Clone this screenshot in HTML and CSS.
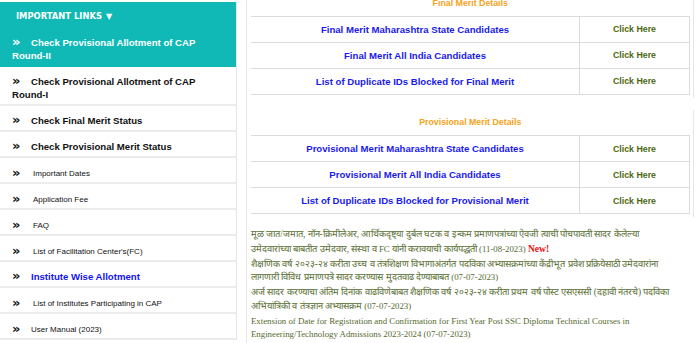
FILE: index.html
```html
<!DOCTYPE html>
<html lang="en">
<head>
  <meta charset="UTF-8">
  <meta name="viewport" content="width=device-width, initial-scale=1.0">
  <title>CAP Admissions</title>
  <link rel="stylesheet" href="styles.css">
</head>
<body>
  <div class="page">
    <div class="sidebar">
      <div class="sidebar-title">IMPORTANT LINKS <span class="caret">&#9660;</span></div>
      <a class="link big active" href="#"><span class="icon">&raquo;</span>Check Provisional Allotment of CAP Round-II</a>
      <a class="link big" href="#"><span class="icon">&raquo;</span>Check Provisional Allotment of CAP Round-I</a>
      <a class="link big" href="#"><span class="icon">&raquo;</span>Check Final Merit Status</a>
      <a class="link big" href="#"><span class="icon">&raquo;</span>Check Provisional Merit Status</a>
      <a class="link small" href="#"><span class="icon">&raquo;</span>Important Dates</a>
      <a class="link small" href="#"><span class="icon">&raquo;</span>Application Fee</a>
      <a class="link small" href="#"><span class="icon">&raquo;</span>FAQ</a>
      <a class="link small" href="#"><span class="icon">&raquo;</span>List of Facilitation Center's(FC)</a>
      <a class="link big blue" href="#"><span class="icon">&raquo;</span>Institute Wise Allotment</a>
      <a class="link small" href="#"><span class="icon">&raquo;</span>List of Institutes Participating in CAP</a>
      <a class="link small tight" href="#"><span class="icon">&raquo;</span>User Manual (2023)</a>
    </div>

    <div class="main">
      <div class="panel first">
        <table class="merit">
          <tr><th colspan="2">Final Merit Details</th></tr>
          <tr><td class="name">Final Merit Maharashtra State Candidates</td><td class="click">Click Here</td></tr>
          <tr><td class="name">Final Merit All India Candidates</td><td class="click">Click Here</td></tr>
          <tr><td class="name">List of Duplicate IDs Blocked for Final Merit</td><td class="click">Click Here</td></tr>
        </table>
      </div>

      <div class="panel">
        <table class="merit">
          <tr><th colspan="2">Provisional Merit Details</th></tr>
          <tr><td class="name">Provisional Merit Maharashtra State Candidates</td><td class="click">Click Here</td></tr>
          <tr><td class="name">Provisional Merit All India Candidates</td><td class="click">Click Here</td></tr>
          <tr><td class="name">List of Duplicate IDs Blocked for Provisional Merit</td><td class="click">Click Here</td></tr>
        </table>
      </div>

      <div class="news">
        <p>मूळ जात/जमात, नॉन-क्रिमीलेअर, आर्थिकदृष्ट्या दुर्बल घटक व इन्कम प्रमाणपत्रांच्या ऐवजी त्याची पोचपावती सादर केलेल्या<br>उमेदवारांच्या बाबतीत उमेदवार, संस्था व <span class="en">FC</span> यांनी करावयाची कार्यपद्धती <span class="date">(11-08-2023)</span> <span class="new">New!</span></p>
        <p>शैक्षणिक वर्ष २०२३-२४ करीता उच्च व तंत्रशिक्षण विभागाअंतर्गत पदविका अभ्यासक्रमांच्या केंद्रीभूत प्रवेश प्रक्रियेसाठी उमेदवारांना लागणारी विविध प्रमाणपत्रे सादर करण्यास मुदतवाढ देण्याबाबत <span class="date">(07-07-2023)</span></p>
        <p>अर्ज सादर करण्याचा अंतिम दिनांक वाढविणेबाबत शैक्षणिक वर्ष २०२३-२४ करीता प्रथम वर्ष पोस्ट एसएससी (दहावी नंतरचे) पदविका अभियांत्रिकी व तंत्रज्ञान अभ्यासक्रम <span class="date">(07-07-2023)</span></p>
        <p class="en">Extension of Date for Registration and Confirmation for First Year Post SSC Diploma Technical Courses in Engineering/Technology Admissions 2023-2024 (07-07-2023)</p>
        <p>अर्ज सादर करण्याचा अंतिम दिनांक वाढविणेबाबत शैक्षणिक वर्ष २०२३-२४ करीता थेट द्वितीय वर्ष पोस्ट एसएससी / एचएससी पदविका अभियांत्रिकी व तंत्रज्ञान <span class="date">(07-07-2023)</span></p>
      </div>
    </div>
  </div>
</body>
</html>
```

FILE: styles.css
```css
* {
  margin: 0;
  padding: 0;
  box-sizing: border-box;
}

body {
  font-family: 'Liberation Sans', Arial, sans-serif;
  background: #ffffff;
  color: #222;
  overflow: hidden;
}

.page {
  display: flex;
  align-items: flex-start;
  gap: 9px;
  width: 700px;
}

/* sidebar */

.sidebar {
  width: 237px;
  flex-shrink: 0;
  margin-top: 2px;
  border-right: 1px solid #e6e6e6;
}

.sidebar-title {
  background: #10b9b6;
  color: #ffffff;
  font-family: 'DejaVu Sans', Verdana, sans-serif;
  font-weight: bold;
  font-size: 8.4px;
  line-height: 13px;
  padding: 8px 16px 5px;
}

.caret {
  font-size: 8px;
  margin-left: 1px;
}

.link {
  display: block;
  color: #111;
  text-decoration: none;
  line-height: 13px;
  padding: 8px 8px 3px 12px;
  border-bottom: 2px solid #ececec;
}

.link .icon {
  display: inline-block;
  vertical-align: top;
  width: 19px;
  font-family: 'DejaVu Sans', sans-serif;
  font-weight: bold;
  font-size: 13px;
  line-height: 12px;
  color: #111;
}

.link.big {
  font-size: 9.6px;
  font-weight: bold;
}

.link.small {
  font-size: 8px;
  padding-top: 9px;
  padding-bottom: 2px;
}

.link.small .icon {
  width: 21px;
}

.link.small.tight .icon {
  width: 19px;
}

.link.active {
  background: #10b9b6;
  color: #ffffff;
  border-bottom-color: #10b9b6;
}

.link.active .icon {
  color: #ffffff;
}

.link.blue {
  color: #1414f0;
}

/* merit tables */

.main {
  flex: 1;
  margin-right: 6px;
  margin-top: -10px;
  border-left: 1px solid #e6e6e6;
}

.panel {
  padding: 0 3px 3px 4px;
  border-right: 1px solid #e6e6e6;
}

.panel.first {
  margin-bottom: 12px;
}

.merit {
  width: 100%;
  border-collapse: collapse;
}

.merit th {
  color: #f5a31a;
  font-size: 8.8px;
  font-weight: bold;
  height: 26px;
  text-align: center;
  border-bottom: 1px solid #dcdcdc;
}

.merit td {
  height: 26px;
  border-bottom: 1px solid #dcdcdc;
  text-align: center;
  font-weight: bold;
}

.merit td.name {
  color: #1a1aee;
  font-size: 9.6px;
  border-right: 1px solid #dcdcdc;
}

.merit td.click {
  width: 110px;
  color: #4c6710;
  font-size: 8.8px;
  border-right: 1px solid #dcdcdc;
}

/* news */

.news {
  padding: 11px 6px 0 4px;
  font-family: 'Liberation Serif', 'Times New Roman', serif;
  color: #556b2f;
  font-size: 9.3px;
}

.news p {
  line-height: 13.5px;
  margin-bottom: 1.5px;
}

.news .date,
.news .en {
  font-size: 8.8px;
}

.news .new {
  color: #ee1111;
  font-weight: bold;
  font-size: 9.6px;
}
```
